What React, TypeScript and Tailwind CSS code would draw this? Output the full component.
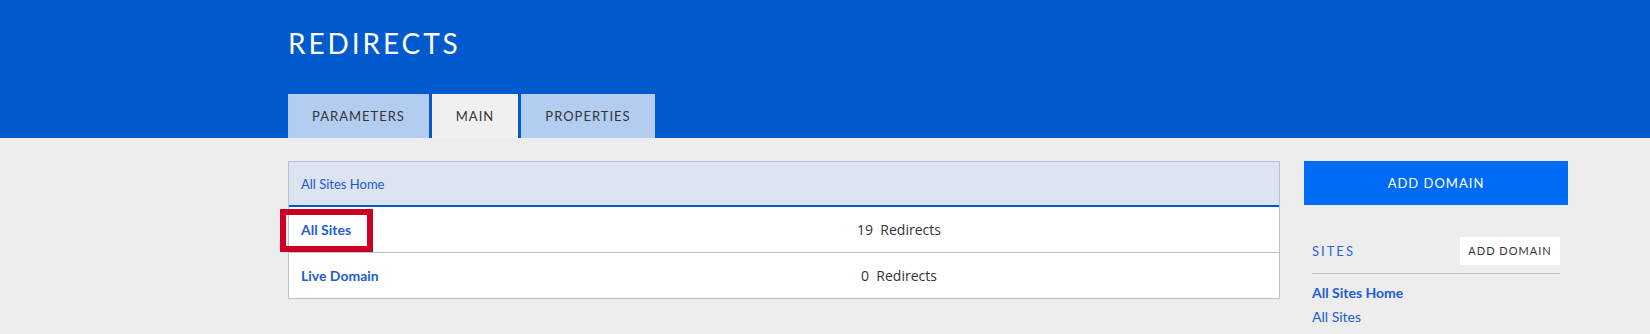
import React from "react";

const lato = { fontFamily: "Lato, 'Noto Sans', sans-serif" };
const openSans = { fontFamily: "'Open Sans', sans-serif" };

export default function App() {
  return (
    <div className="h-[334px] w-[1650px] overflow-hidden bg-[#ededed]" style={lato}>
      <header className="h-[138px] bg-[#0059cd]">
        <div className="ml-[288px] flex h-full flex-col">
          <h1 className="pt-[26px] text-[28px] leading-[34px] font-normal tracking-[2.9px] text-white">
            REDIRECTS
          </h1>
          <nav className="mt-auto flex gap-[3px]">
            <a className="flex h-[44px] w-[141px] items-center justify-center bg-[#b3cdf0] text-[13px] leading-5 tracking-[1px] text-[#333]">
              PARAMETERS
            </a>
            <a className="flex h-[44px] w-[86px] items-center justify-center bg-[#f0f0f0] text-[13px] leading-5 tracking-[1px] text-[#333]">
              MAIN
            </a>
            <a className="flex h-[44px] w-[134px] items-center justify-center bg-[#b3cdf0] text-[13px] leading-5 tracking-[1px] text-[#333]">
              PROPERTIES
            </a>
          </nav>
        </div>
      </header>

      <main className="ml-[288px] flex w-[1280px] items-start gap-6 pt-[23px]">
        <div className="w-[992px] border border-[#b4c3d6] bg-white">
          <div className="flex h-[45px] items-center border-b-2 border-[#0059cd] bg-[#dbe4f0] px-3">
            <a className="text-[13px] leading-5 text-[#1c58d4]">All Sites Home</a>
          </div>
          <div className="relative grid h-[46px] grid-cols-[230px_1fr] items-center border-b border-[#b4c3d6]">
            <a className="pl-3 text-[14px] leading-5 font-bold text-[#1f5bd6]">All Sites</a>
            <span className="text-center text-[14px] leading-5 text-[#333]" style={openSans}>
              19&nbsp; Redirects
            </span>
            <div className="pointer-events-none absolute top-[2px] left-[-9px] h-[43px] w-[93px] border-[6px] border-[#cc0022]" />
          </div>
          <div className="grid h-[45px] grid-cols-[230px_1fr] items-center">
            <a className="pl-3 text-[14px] leading-5 font-bold text-[#1f5bd6]">Live Domain</a>
            <span className="text-center text-[14px] leading-5 text-[#333]" style={openSans}>
              0&nbsp; Redirects
            </span>
          </div>
        </div>

        <aside className="w-[264px]">
          <button className="flex h-[44px] w-full items-center justify-center bg-[#006cf5] text-[13px] leading-5 tracking-[1px] text-white">
            ADD DOMAIN
          </button>
          <div className="mt-8 px-2">
            <div className="flex items-center justify-between border-b border-[#b8c2d0] pb-2">
              <span className="text-[13px] leading-5 tracking-[2px] text-[#2d63d8]">SITES</span>
              <button className="flex h-[28px] w-[100px] items-center justify-center bg-white text-[11px] leading-4 tracking-[1px] text-[#333]">
                ADD DOMAIN
              </button>
            </div>
            <div className="pt-[7px]">
              <a className="block text-[14px] leading-6 font-bold text-[#1f5bd6]">All Sites Home</a>
              <a className="block text-[14px] leading-6 text-[#1f5bd6]">All Sites</a>
            </div>
          </div>
        </aside>
      </main>
    </div>
  );
}
